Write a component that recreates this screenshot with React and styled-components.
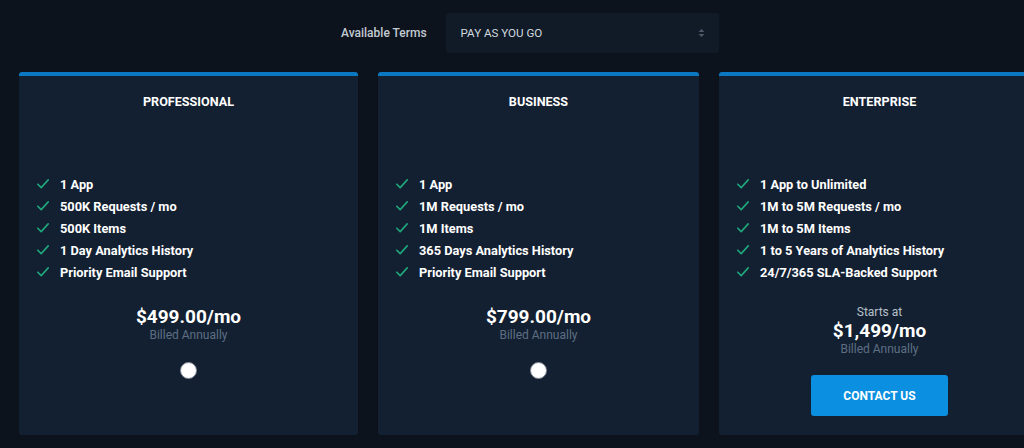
import React from "react";
import styled, { createGlobalStyle } from "styled-components";

const Global = createGlobalStyle`
  html, body { margin: 0; padding: 0; background: #0c131c; }
  body { font-family: Roboto, "Liberation Sans", Arial, sans-serif; overflow: hidden; }
  * { box-sizing: border-box; }
`;

const Page = styled.div`
  width: 1024px;
  height: 448px;
  background: #0c131c;
  overflow: hidden;
  padding-top: 13px;
`;

const TermsRow = styled.div`
  display: flex;
  align-items: center;
  gap: 19px;
  padding-left: 341px;
  height: 40px;
`;

const TermsLabel = styled.span`
  color: #c3cad2;
  font-size: 12px;
  font-weight: 500;
`;

const Select = styled.div`
  width: 273px;
  height: 40px;
  background: #111b28;
  border-radius: 3px;
  display: flex;
  align-items: center;
  justify-content: space-between;
  padding: 0 14px 0 15px;
  color: #d3d9df;
  font-size: 11.6px;
`;

const Cards = styled.div`
  display: grid;
  grid-template-columns: 339px 321px 321px;
  gap: 20px;
  padding-left: 19px;
  margin-top: 19px;
  width: 1060px;
`;

const Card = styled.div`
  height: 363px;
  background: #132031;
  border-top: 4px solid #0b79c1;
  border-radius: 3px;
  padding: 18px 18px 0;
  display: flex;
  flex-direction: column;
  align-items: stretch;
`;

const Title = styled.div`
  text-align: center;
  color: #ffffff;
  font-size: 12.6px;
  font-weight: 700;
  line-height: 16px;
  height: 16px;
`;

const Features = styled.ul`
  list-style: none;
  margin: 63px 0 0;
  padding: 0;
`;

const Feature = styled.li`
  display: flex;
  align-items: center;
  gap: 11px;
  height: 22px;
  color: #ffffff;
  font-size: 12.8px;
  font-weight: 700;
`;

const PriceBlock = styled.div`
  margin-top: ${(p) => p.$top}px;
  display: flex;
  flex-direction: column;
  align-items: center;
`;

const StartsAt = styled.div`
  color: #b7c0ca;
  font-size: 12px;
  line-height: 15px;
`;

const Price = styled.div`
  color: #ffffff;
  font-size: 19px;
  font-weight: 700;
  line-height: 22px;
`;

const Billed = styled.div`
  color: #5e6f85;
  font-size: 12px;
  line-height: 14px;
`;

const Radio = styled.div`
  width: 17px;
  height: 17px;
  border-radius: 50%;
  background: #ffffff;
  border: 1px solid #7d8794;
  margin-top: 20px;
`;

const ContactButton = styled.button`
  margin-top: 19px;
  width: 137px;
  height: 41px;
  border: none;
  border-radius: 3px;
  background: #0b8fe0;
  color: #ffffff;
  font-family: inherit;
  font-size: 12px;
  font-weight: 700;
`;

const Check = () => (
  <svg width="12" height="10" viewBox="0 0 12 10" fill="none">
    <path d="M0.8 5.2 L4.2 8.6 L11.2 0.9" stroke="#1fa87c" strokeWidth="1.6" strokeLinecap="round" strokeLinejoin="round" />
  </svg>
);

const Arrows = () => (
  <svg width="7" height="10" viewBox="0 0 7 10">
    <path d="M3.5 1 L6.5 4 L0.5 4 Z" fill="#4c5868" />
    <path d="M3.5 9 L6.5 6 L0.5 6 Z" fill="#4c5868" />
  </svg>
);

const plans = [
  {
    name: "PROFESSIONAL",
    features: ["1 App", "500K Requests / mo", "500K Items", "1 Day Analytics History", "Priority Email Support"],
    price: "$499.00/mo",
  },
  {
    name: "BUSINESS",
    features: ["1 App", "1M Requests / mo", "1M Items", "365 Days Analytics History", "Priority Email Support"],
    price: "$799.00/mo",
  },
  {
    name: "ENTERPRISE",
    features: ["1 App to Unlimited", "1M to 5M Requests / mo", "1M to 5M Items", "1 to 5 Years of Analytics History", "24/7/365 SLA-Backed Support"],
    price: "$1,499/mo",
    enterprise: true,
  },
];

export default function App() {
  return (
    <Page>
      <Global />
      <TermsRow>
        <TermsLabel>Available Terms</TermsLabel>
        <Select>
          <span>PAY AS YOU GO</span>
          <Arrows />
        </Select>
      </TermsRow>
      <Cards>
        {plans.map((p) => (
          <Card key={p.name}>
            <Title>{p.name}</Title>
            <Features>
              {p.features.map((f) => (
                <Feature key={f}>
                  <Check />
                  <span>{f}</span>
                </Feature>
              ))}
            </Features>
            <PriceBlock $top={p.enterprise ? 22 : 23}>
              {p.enterprise && <StartsAt>Starts at</StartsAt>}
              <Price>{p.price}</Price>
              <Billed>Billed Annually</Billed>
              {p.enterprise ? <ContactButton>CONTACT US</ContactButton> : <Radio />}
            </PriceBlock>
          </Card>
        ))}
      </Cards>
    </Page>
  );
}
